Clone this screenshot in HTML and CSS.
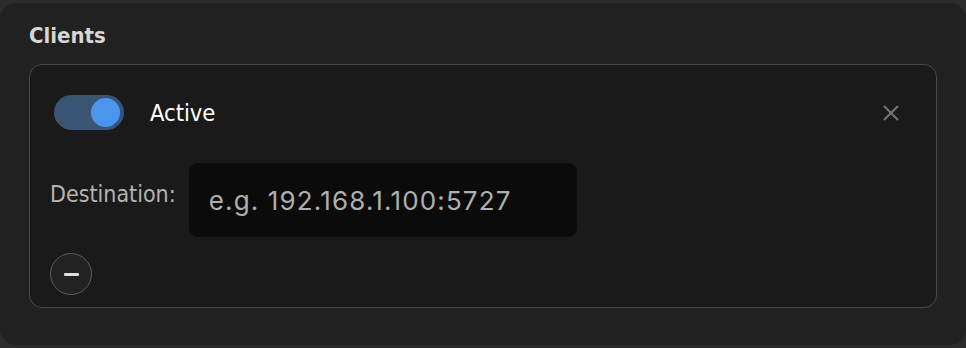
FILE: index.html
```html
<!DOCTYPE html>
<html>
<head>
  <meta charset="UTF-8">
  <meta name="viewport" content="width=device-width, initial-scale=1.0">
  <title>Clients</title>
  <link rel="stylesheet" href="styles.css">
</head>
<body>
  <div class="panel">
    <h2>Clients</h2>

    <div class="client-card">
      <div class="client-header">
        <label class="switch">
          <input type="checkbox" checked>
          <span class="slider"></span>
        </label>
        <span class="switch-label">Active</span>
        <button class="close-btn" title="Remove">
          <svg width="18" height="18" viewBox="0 0 18 18">
            <path d="M2 2 L16 16 M16 2 L2 16" stroke="#777" stroke-width="2" fill="none"/>
          </svg>
        </button>
      </div>

      <div class="form-row">
        <label for="destination">Destination:</label>
        <input type="text" id="destination" placeholder="e.g. 192.168.1.100:5727">
      </div>

      <button class="minus-btn" title="Remove destination"><span></span></button>
    </div>
  </div>
</body>
</html>
```

FILE: styles.css
```css
body {
  margin: 0;
  padding-top: 3px;
  background-color: #2c2c2c;
  font-family: "DejaVu Sans Condensed", "DejaVu Sans", sans-serif;
  font-stretch: condensed;
}
.panel {
  height: 342px;
  box-sizing: border-box;
  background-color: #212121;
  border-radius: 16px;
  padding: 0 29px;
  overflow: hidden;
}
h2 {
  margin: 0;
  padding-top: 20px;
  height: 61px;
  box-sizing: border-box;
  font-size: 22px;
  line-height: 26px;
  font-weight: bold;
  color: #d6d6d6;
}
.client-card {
  height: 244px;
  box-sizing: border-box;
  border: 1.5px solid #4a4a4a;
  border-radius: 13px;
  background-color: #1a1a1a;
  padding: 30px 36px 0 20px;
  display: flex;
  flex-direction: column;
  align-items: flex-start;
}
.client-header {
  display: flex;
  align-items: center;
  width: 100%;
  height: 35px;
}
.switch {
  position: relative;
  display: inline-block;
  width: 70px;
  height: 35px;
  margin-left: 4px;
}
.switch input {
  opacity: 0;
  width: 0;
  height: 0;
}
.slider {
  position: absolute;
  inset: 0;
  background-color: #3a5474;
  border-radius: 18px;
}
.slider::before {
  content: "";
  position: absolute;
  width: 29px;
  height: 29px;
  top: 3px;
  left: 37px;
  border-radius: 50%;
  background-color: #4a96ef;
}
.switch-label {
  margin-left: 26px;
  font-size: 23.5px;
  color: #fff;
  flex: 1;
}
.close-btn {
  background: none;
  border: none;
  padding: 0;
  width: 18px;
  height: 18px;
  cursor: pointer;
}
.form-row {
  display: flex;
  align-items: flex-start;
  margin-top: 33px;
}
.form-row label {
  font-size: 23px;
  line-height: 28px;
  color: #b4b4b4;
  padding-top: 17px;
  margin-right: 13px;
}
.form-row input {
  width: 388px;
  height: 74px;
  box-sizing: border-box;
  border: none;
  border-radius: 9px;
  background-color: #0b0b0b;
  padding: 0 20px;
  font-family: Inter, sans-serif;
  font-size: 26px;
  letter-spacing: 1.15px;
  color: #eee;
  outline: none;
}
.form-row input::placeholder {
  color: #afafaf;
}
.minus-btn {
  margin-top: 16px;
  width: 42px;
  height: 42px;
  box-sizing: border-box;
  border: 1.5px solid #5c5c5c;
  border-radius: 50%;
  background-color: #222;
  display: flex;
  align-items: center;
  justify-content: center;
  padding: 0;
  cursor: pointer;
}
.minus-btn span {
  display: block;
  width: 15px;
  height: 3px;
  background-color: #ddd;
  border-radius: 1px;
}
```
